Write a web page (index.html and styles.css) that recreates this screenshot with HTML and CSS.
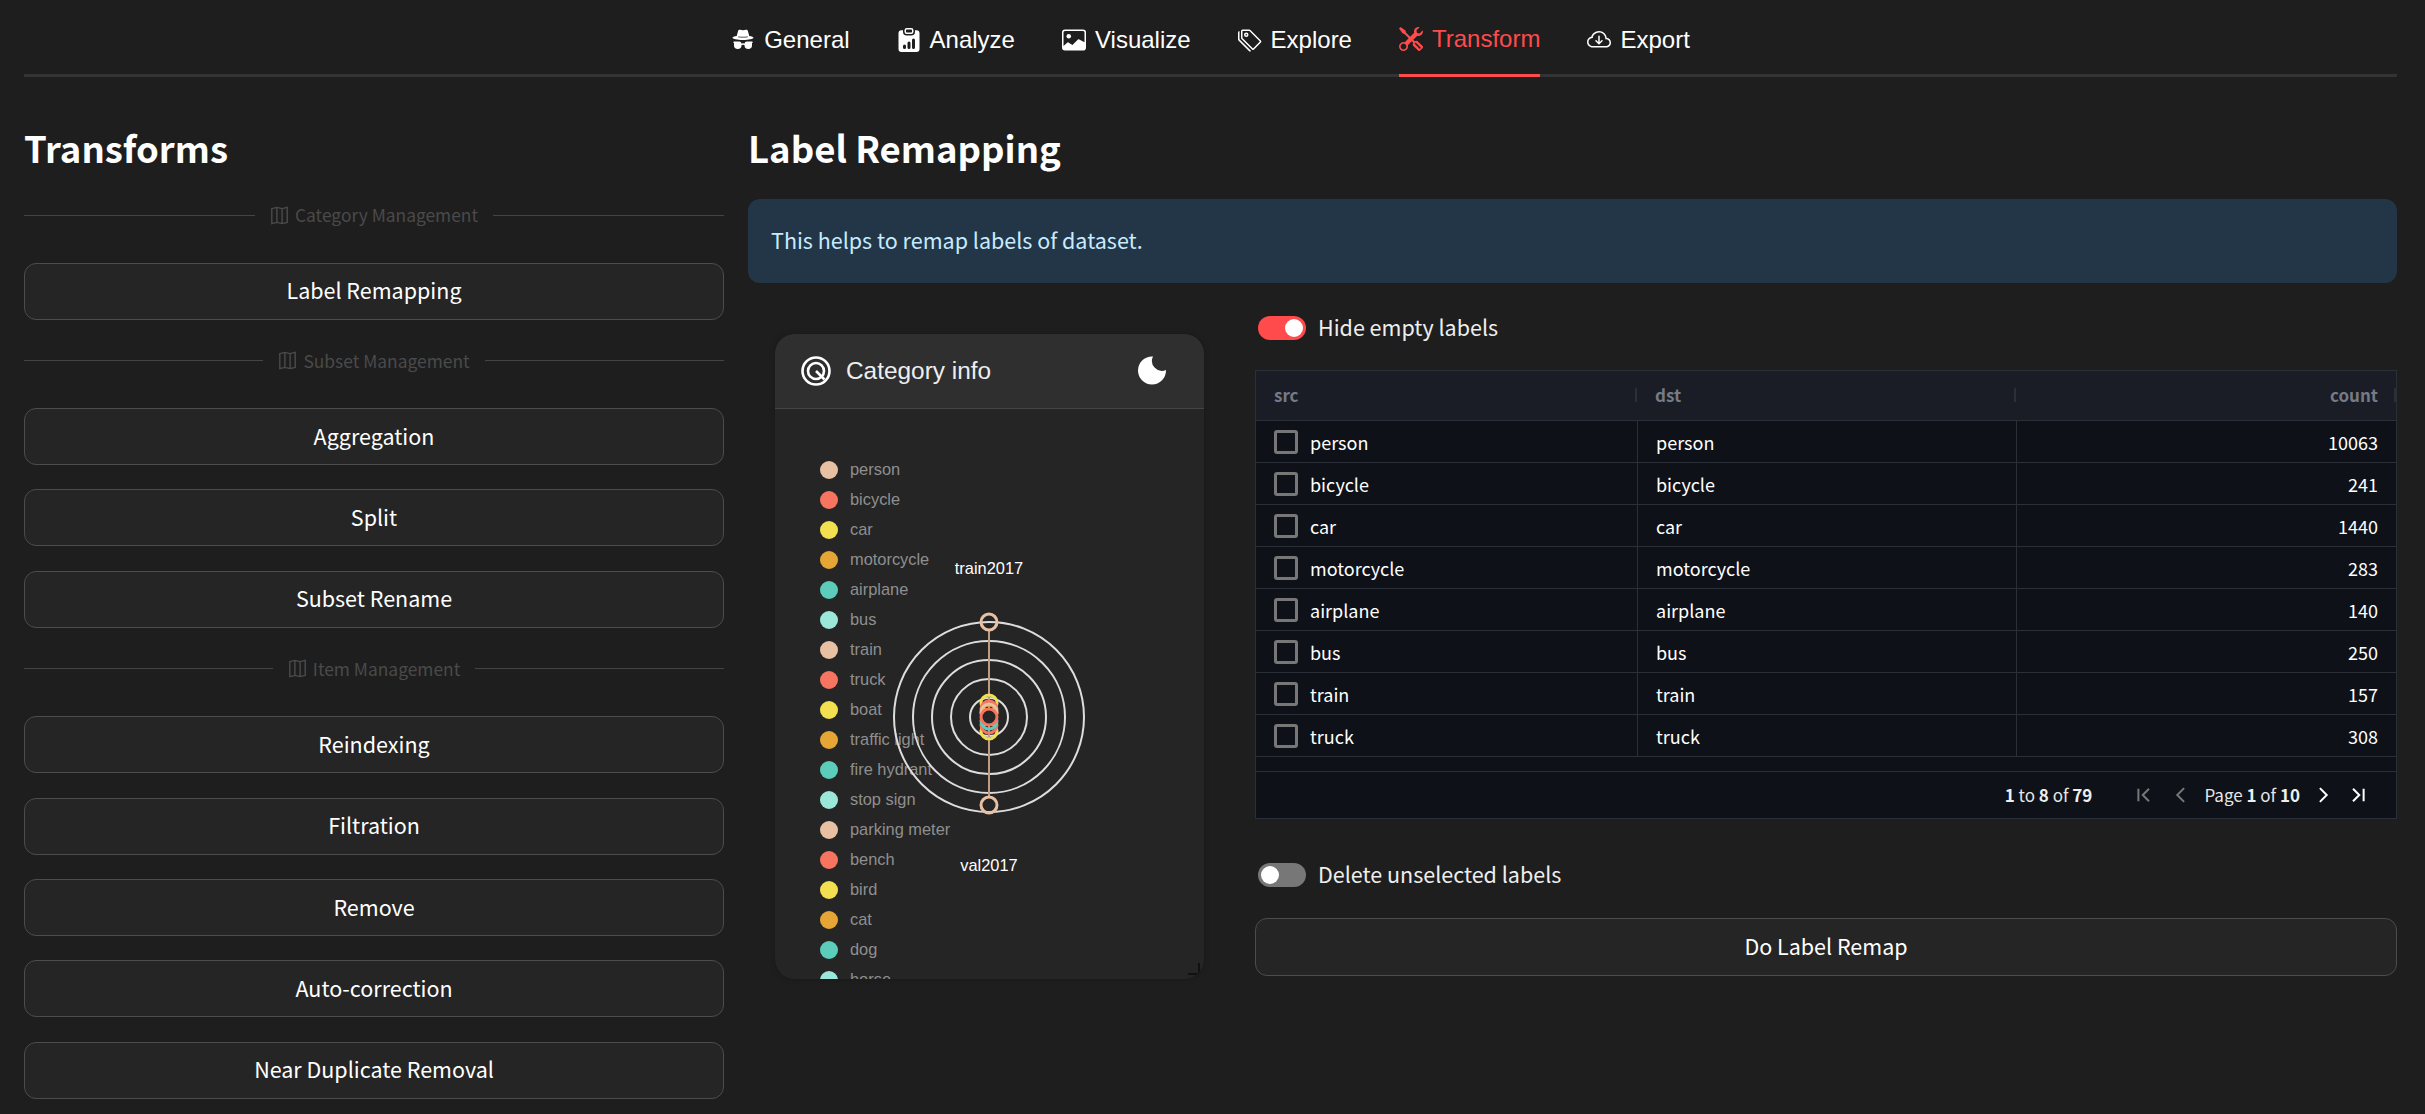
FILE: index.html
```html
<!DOCTYPE html>
<html lang="en">
<head>
<meta charset="utf-8">
<title>Transform</title>
<link rel="stylesheet" href="styles.css">
</head>
<body>
<nav class="nav">
  <a class="tab"><svg class="nav-ico" viewBox="0 0 16 16"><path d="m4.736 1.968-.892 3.269-.014.058C2.113 5.568 1 6.006 1 6.5 1 7.328 4.134 8 8 8s7-.672 7-1.5c0-.494-1.113-.932-2.83-1.205a1.032 1.032 0 0 0-.014-.058l-.892-3.27c-.146-.533-.698-.849-1.239-.734C9.411 1.363 8.62 1.5 8 1.5c-.62 0-1.411-.136-2.025-.267-.541-.115-1.093.2-1.239.735Zm.015 3.867a.25.25 0 0 1 .274-.224c.9.092 1.91.143 2.975.143a29.58 29.58 0 0 0 2.975-.143.25.25 0 0 1 .05.498c-.918.093-1.944.145-3.025.145s-2.107-.052-3.025-.145a.25.25 0 0 1-.224-.274ZM3.5 10h2a.5.5 0 0 1 .5.5v1a1.5 1.5 0 0 1-3 0v-1a.5.5 0 0 1 .5-.5Zm-1.5.5c0-.175.03-.344.085-.5H2a.5.5 0 0 1 0-1h3.5a1.5 1.5 0 0 1 1.488 1.312 3.5 3.5 0 0 1 2.024 0A1.5 1.5 0 0 1 10.5 9H14a.5.5 0 0 1 0 1h-.085c.055.156.085.325.085.5v1a2.5 2.5 0 0 1-5 0v-.14l-.21-.07a2.5 2.5 0 0 0-1.58 0l-.21.07v.14a2.5 2.5 0 0 1-5 0v-1Zm8.5-.5h2a.5.5 0 0 1 .5.5v1a1.5 1.5 0 0 1-3 0v-1a.5.5 0 0 1 .5-.5Z"/></svg>General</a>
  <a class="tab"><svg class="nav-ico" viewBox="0 0 16 16"><path d="M6.5 0A1.5 1.5 0 0 0 5 1.5v1A1.5 1.5 0 0 0 6.5 4h3A1.5 1.5 0 0 0 11 2.5v-1A1.5 1.5 0 0 0 9.5 0h-3Zm3 1a.5.5 0 0 1 .5.5v1a.5.5 0 0 1-.5.5h-3a.5.5 0 0 1-.5-.5v-1a.5.5 0 0 1 .5-.5h3Z"/><path d="M4 1.5H3a2 2 0 0 0-2 2V14a2 2 0 0 0 2 2h10a2 2 0 0 0 2-2V3.5a2 2 0 0 0-2-2h-1v1A2.5 2.5 0 0 1 9.5 5h-3A2.5 2.5 0 0 1 4 2.5v-1ZM10 8a1 1 0 1 1 2 0v5a1 1 0 1 1-2 0V8Zm-6 4a1 1 0 1 1 2 0v1a1 1 0 1 1-2 0v-1Zm4-3a1 1 0 0 1 1 1v3a1 1 0 1 1-2 0v-3a1 1 0 0 1 1-1Z"/></svg>Analyze</a>
  <a class="tab"><svg class="nav-ico" viewBox="0 0 16 16"><path d="M6.002 5.5a1.5 1.5 0 1 1-3 0 1.5 1.5 0 0 1 3 0z"/><path d="M2.002 1a2 2 0 0 0-2 2v10a2 2 0 0 0 2 2h12a2 2 0 0 0 2-2V3a2 2 0 0 0-2-2h-12zm12 1a1 1 0 0 1 1 1v6.5l-3.777-1.947a.5.5 0 0 0-.577.093l-3.71 3.71-2.66-1.772a.5.5 0 0 0-.63.062L1.002 12V3a1 1 0 0 1 1-1h12z"/></svg>Visualize</a>
  <a class="tab"><svg class="nav-ico" viewBox="0 0 16 16"><path d="M3 2v4.586l7 7L14.586 9l-7-7H3zM2 2a1 1 0 0 1 1-1h4.586a1 1 0 0 1 .707.293l7 7a1 1 0 0 1 0 1.414l-4.586 4.586a1 1 0 0 1-1.414 0l-7-7A1 1 0 0 1 2 6.586V2z"/><path d="M5.5 5a.5.5 0 1 1 0-1 .5.5 0 0 1 0 1zm0 1a1.5 1.5 0 1 0 0-3 1.5 1.5 0 0 0 0 3zM1 7.086a1 1 0 0 0 .293.707L8.75 15.25l-.043.043a1 1 0 0 1-1.414 0l-7-7A1 1 0 0 1 0 7.586V3a1 1 0 0 1 1-1v5.086z"/></svg>Explore</a>
  <a class="tab tab-active"><svg class="nav-ico" viewBox="0 0 16 16"><path d="M1 0 0 1l2.2 3.081a1 1 0 0 0 .815.419h.07a1 1 0 0 1 .708.293l2.675 2.675-2.617 2.654A3.003 3.003 0 0 0 0 13a3 3 0 1 0 5.878-.851l2.654-2.617.968.968-.305.914a1 1 0 0 0 .242 1.023l3.27 3.27a.997.997 0 0 0 1.414 0l1.586-1.586a.997.997 0 0 0 0-1.414l-3.27-3.27a1 1 0 0 0-1.023-.242L10.5 9.5l-.96-.96 2.68-2.643A3.005 3.005 0 0 0 16 3c0-.269-.035-.53-.102-.777l-2.14 2.141L12 4l-.364-1.757L13.777.102a3 3 0 0 0-3.675 3.68L7.462 6.46 4.793 3.793a1 1 0 0 1-.293-.707v-.071a1 1 0 0 0-.419-.814L1 0Zm9.646 10.646a.5.5 0 0 1 .708 0l2.914 2.915a.5.5 0 0 1-.707.707l-2.915-2.914a.5.5 0 0 1 0-.708ZM3 11l.471.242.529.026.287.445.445.287.026.529L5 13l-.242.471-.026.529-.445.287-.287.445-.529.026L3 15l-.471-.242L2 14.732l-.287-.445L1.268 14l-.026-.529L1 13l.242-.471.026-.529.445-.287.287-.445.529-.026L3 11Z"/></svg>Transform</a>
  <a class="tab"><svg class="nav-ico" viewBox="0 0 16 16"><path d="M7.646 10.854a.5.5 0 0 0 .708 0l2-2a.5.5 0 0 0-.708-.708L8.5 9.293V5.5a.5.5 0 0 0-1 0v3.793L6.354 8.146a.5.5 0 1 0-.708.708l2 2z"/><path d="M4.406 3.342A5.53 5.53 0 0 1 8 2c2.69 0 4.923 2 5.166 4.579C14.758 6.804 16 8.137 16 9.773 16 11.569 14.502 13 12.687 13H3.781C1.708 13 0 11.366 0 9.318c0-1.763 1.266-3.223 2.942-3.593.143-.863.698-1.723 1.464-2.383zm.653.757c-.757.653-1.153 1.44-1.153 2.056v.448l-.445.049C2.064 6.805 1 7.952 1 9.318 1 10.785 2.23 12 3.781 12h8.906C13.98 12 15 10.988 15 9.773c0-1.216-1.02-2.228-2.313-2.228h-.5v-.5C12.188 4.825 10.328 3 8 3a4.53 4.53 0 0 0-2.941 1.1z"/></svg>Export</a>
</nav>

<div class="layout">
  <aside class="side">
    <h1 class="title">Transforms</h1>
    <div class="divider div-first"><span class="div-label"><svg class="map-ico" viewBox="0 0 16 16"><path d="M1.5 2.2l4.3-1 4.4 1 4.3-1v12.6l-4.3 1-4.4-1-4.3 1z M5.8 1.2v12.6 M10.2 2.2v12.6"/></svg>Category Management</span></div>
    <button class="btn btn-first">Label Remapping</button>
    <div class="divider div-next"><span class="div-label"><svg class="map-ico" viewBox="0 0 16 16"><path d="M1.5 2.2l4.3-1 4.4 1 4.3-1v12.6l-4.3 1-4.4-1-4.3 1z M5.8 1.2v12.6 M10.2 2.2v12.6"/></svg>Subset Management</span></div>
    <button class="btn btn-first">Aggregation</button>
    <button class="btn">Split</button>
    <button class="btn">Subset Rename</button>
    <div class="divider div-next"><span class="div-label"><svg class="map-ico" viewBox="0 0 16 16"><path d="M1.5 2.2l4.3-1 4.4 1 4.3-1v12.6l-4.3 1-4.4-1-4.3 1z M5.8 1.2v12.6 M10.2 2.2v12.6"/></svg>Item Management</span></div>
    <button class="btn btn-first">Reindexing</button>
    <button class="btn">Filtration</button>
    <button class="btn">Remove</button>
    <button class="btn">Auto-correction</button>
    <button class="btn">Near Duplicate Removal</button>
  </aside>

  <main class="main">
    <h1 class="title">Label Remapping</h1>
    <div class="info"><span class="lift">This helps to remap labels of dataset.</span></div>
    <div class="columns">
      <section class="card">
        <header class="card-head">
          <svg class="card-ico" viewBox="0 0 30 30"><circle cx="15" cy="15" r="13.5" fill="none" stroke="#fff" stroke-width="2.6"/><circle cx="15" cy="15" r="8" fill="none" stroke="#fff" stroke-width="2.6"/><path d="M15 15l8.5 8.5" stroke="#fff" stroke-width="2.6" fill="none"/></svg>
          <span class="card-title">Category info</span>
          <svg class="card-ico" viewBox="0 0 30 30"><path d="M15 .5A14 14 0 1 0 28 14 10 10 0 0 1 15 .5Z" fill="#fff"/></svg>
        </header>
        <svg class="chart" viewBox="0 0 429 570" width="429" height="570">
          <g class="legend">
            <circle cx="54" cy="61" r="9" fill="#e8c0a3"/><text x="75" y="66">person</text>
            <circle cx="54" cy="91" r="9" fill="#f77461"/><text x="75" y="96">bicycle</text>
            <circle cx="54" cy="121" r="9" fill="#f2e050"/><text x="75" y="126">car</text>
            <circle cx="54" cy="151" r="9" fill="#e6a635"/><text x="75" y="156">motorcycle</text>
            <circle cx="54" cy="181" r="9" fill="#5ccdba"/><text x="75" y="186">airplane</text>
            <circle cx="54" cy="211" r="9" fill="#9be7d9"/><text x="75" y="216">bus</text>
            <circle cx="54" cy="241" r="9" fill="#e8c0a3"/><text x="75" y="246">train</text>
            <circle cx="54" cy="271" r="9" fill="#f77461"/><text x="75" y="276">truck</text>
            <circle cx="54" cy="301" r="9" fill="#f2e050"/><text x="75" y="306">boat</text>
            <circle cx="54" cy="331" r="9" fill="#e6a635"/><text x="75" y="336">traffic light</text>
            <circle cx="54" cy="361" r="9" fill="#5ccdba"/><text x="75" y="366">fire hydrant</text>
            <circle cx="54" cy="391" r="9" fill="#9be7d9"/><text x="75" y="396">stop sign</text>
            <circle cx="54" cy="421" r="9" fill="#e8c0a3"/><text x="75" y="426">parking meter</text>
            <circle cx="54" cy="451" r="9" fill="#f77461"/><text x="75" y="456">bench</text>
            <circle cx="54" cy="481" r="9" fill="#f2e050"/><text x="75" y="486">bird</text>
            <circle cx="54" cy="511" r="9" fill="#e6a635"/><text x="75" y="516">cat</text>
            <circle cx="54" cy="541" r="9" fill="#5ccdba"/><text x="75" y="546">dog</text>
            <circle cx="54" cy="571" r="9" fill="#9be7d9"/><text x="75" y="576">horse</text>
          </g>
          <g class="rings">
            <circle cx="214" cy="308" r="19"/><circle cx="214" cy="308" r="38"/><circle cx="214" cy="308" r="57"/><circle cx="214" cy="308" r="76"/><circle cx="214" cy="308" r="95"/>
          </g>
          <path d="M214 221V388" stroke="#c09c82" stroke-width="2" fill="none"/>
          <g class="marks">
            <circle cx="214" cy="213" r="8" stroke="#e8c0a3"/>
            <circle cx="214" cy="396" r="8" stroke="#e8c0a3"/>
            <circle cx="214" cy="294" r="8" stroke="#f2e050"/>
            <circle cx="214" cy="322" r="8" stroke="#f2e050"/>
            <circle cx="214" cy="300" r="8" stroke="#f77461"/>
            <circle cx="214" cy="316" r="8" stroke="#f77461"/>
            <circle cx="214" cy="312" r="8" stroke="#5ccdba"/>
            <circle cx="214" cy="304" r="8" stroke="#e6a635"/>
            <circle cx="214" cy="303" r="8" stroke="#e8c0a3"/>
            <circle class="mark-top" cx="214" cy="308" r="8" stroke="#f77461"/>
          </g>
          <text class="axis" x="214" y="165">train2017</text>
          <text class="axis" x="214" y="462">val2017</text>
        </svg>
        <svg class="resize" viewBox="0 0 12 12"><path d="M11 0V11H0" fill="none" stroke="#111" stroke-width="2"/></svg>
      </section>

      <section class="panel">
        <label class="toggle-row"><span class="toggle toggle-on"><span class="knob"></span></span><span class="lift">Hide empty labels</span></label>
        <div class="grid">
          <div class="grid-row grid-head">
            <div class="cell"><span>src</span><i class="grip"></i></div>
            <div class="cell"><span>dst</span><i class="grip"></i></div>
            <div class="cell cell-num"><span>count</span><i class="grip"></i></div>
          </div>
          <div class="grid-body">
            <div class="grid-row"><div class="cell"><i class="check"></i>person</div><div class="cell">person</div><div class="cell cell-num">10063</div></div>
            <div class="grid-row"><div class="cell"><i class="check"></i>bicycle</div><div class="cell">bicycle</div><div class="cell cell-num">241</div></div>
            <div class="grid-row"><div class="cell"><i class="check"></i>car</div><div class="cell">car</div><div class="cell cell-num">1440</div></div>
            <div class="grid-row"><div class="cell"><i class="check"></i>motorcycle</div><div class="cell">motorcycle</div><div class="cell cell-num">283</div></div>
            <div class="grid-row"><div class="cell"><i class="check"></i>airplane</div><div class="cell">airplane</div><div class="cell cell-num">140</div></div>
            <div class="grid-row"><div class="cell"><i class="check"></i>bus</div><div class="cell">bus</div><div class="cell cell-num">250</div></div>
            <div class="grid-row"><div class="cell"><i class="check"></i>train</div><div class="cell">train</div><div class="cell cell-num">157</div></div>
            <div class="grid-row"><div class="cell"><i class="check"></i>truck</div><div class="cell">truck</div><div class="cell cell-num">308</div></div>
          </div>
          <div class="grid-foot">
            <span class="range"><b>1</b> to <b>8</b> of <b>79</b></span>
            <svg class="pg pg-dim" viewBox="0 0 16 16"><path d="M3.5 3v10M12 3L7 8l5 5"/></svg>
            <svg class="pg pg-dim pg-prev" viewBox="0 0 16 16"><path d="M10.5 2.5L5 8l5.5 5.5"/></svg>
            <span class="page">Page <b>1</b> of <b>10</b></span>
            <svg class="pg pg-next" viewBox="0 0 16 16"><path d="M5.5 2.5L11 8l-5.5 5.5"/></svg>
            <svg class="pg pg-last" viewBox="0 0 16 16"><path d="M12.5 3v10M4 3l5 5-5 5"/></svg>
          </div>
        </div>
        <label class="toggle-row toggle-row-2"><span class="toggle"><span class="knob"></span></span><span class="lift">Delete unselected labels</span></label>
        <button class="btn btn-do">Do Label Remap</button>
      </section>
    </div>
  </main>
</div>
</body>
</html>
```
FILE: styles.css
```css
* { box-sizing: border-box; }
html, body { margin: 0; height: 1114px; overflow: hidden; }
body {
  background: #1e1e1e;
  color: #fff;
  font-family: "Noto Sans CJK SC", "Source Sans Pro", "Noto Sans", sans-serif;
  font-size: 21.5px;
}
.nav {
  margin: 0 28px 0 24px;
  height: 77px;
  border-bottom: 3px solid #333;
  display: flex;
  justify-content: center;
  gap: 47px;
}
.tab {
  display: flex;
  align-items: center;
  gap: 9px;
  height: 77px;
  padding-top: 3px;
  font-family: "Liberation Sans", Arial, sans-serif;
  font-size: 24px;
  color: #fff;
}
.nav-ico { width: 24px; height: 24px; fill: currentColor; flex: none; }
.tab-active { color: #ff4b4b; border-bottom: 3px solid #ff4b4b; }

.layout { display: flex; padding: 0 28px 0 24px; gap: 24px; }
.side { width: 700px; flex: none; }
.main { flex: 1; min-width: 0; }
.title {
  margin: 0;
  padding-top: 43px;
  font-size: 36.5px;
  line-height: 56px;
  font-weight: 600;
}
.lift { padding-bottom: 3px; }
.divider {
  display: flex;
  align-items: center;
  gap: 15px;
  height: 22px;
  color: #4a4a4a;
  font-size: 17.4px;
  line-height: 22px;
}
.divider::before, .divider::after { content: ""; flex: 1; height: 1px; background: #444; }
.div-first { margin-top: 28px; }
.div-next { margin-top: 30px; }
.div-label { display: flex; align-items: center; gap: 6px; }
.map-ico { width: 19px; height: 19px; fill: none; stroke: #4a4a4a; stroke-width: 1.2; }
.btn {
  display: block;
  width: 100%;
  height: 57px;
  margin-top: 24.4px;
  padding-bottom: 3px;
  background: #252525;
  border: 1px solid #4c4c4c;
  border-radius: 12px;
  color: #fff;
  font-family: inherit;
  font-size: 21.5px;
  line-height: 28px;
}
.btn-first { margin-top: 36.5px; }
.info {
  margin-top: 23px;
  height: 84px;
  padding: 0 23px;
  display: flex;
  align-items: center;
  border-radius: 12px;
  background: #233648;
  color: #c7ebff;
  font-size: 21.5px;
}
.columns { display: flex; margin-top: 30px; }
.card {
  position: relative;
  width: 429px;
  height: 645px;
  margin: 21px 0 0 27px;
  flex: none;
  background: #252525;
  border-radius: 20px;
  overflow: hidden;
  box-shadow: 0 0 6px rgba(0,0,0,.2);
}
.card-head {
  height: 75px;
  background: #2f2f2f;
  border-bottom: 1px solid #444;
  padding: 0 36px 0 26px;
  display: flex;
  align-items: center;
  gap: 15px;
}
.card-ico { width: 30px; height: 30px; flex: none; }
.card-title { flex: 1; font-family: "Liberation Sans", Arial, sans-serif; font-size: 24.4px; color: #eee; }
.chart { display: block; }
.legend text { font-family: "Liberation Sans", Arial, sans-serif; font-size: 16.4px; fill: #8f8f8f; }
.rings circle { fill: none; stroke: #ddd; stroke-width: 2; }
.marks circle { fill: none; stroke-width: 3; }
.marks .mark-top { fill: #252525; }
.axis { font-family: "Liberation Sans", Arial, sans-serif; font-size: 16.4px; fill: #fff; text-anchor: middle; }
.resize { position: absolute; right: 4px; bottom: 4px; width: 12px; height: 12px; }

.panel { flex: 1; min-width: 0; margin-left: 51px; }
.toggle-row { display: flex; align-items: center; gap: 12px; height: 30px; padding-left: 3px; font-size: 21.5px; color: #eee; }
.toggle { width: 48px; height: 24px; border-radius: 12px; background: #777; display: flex; align-items: center; padding: 0 3px; flex: none; }
.toggle-on { background: #ff4b4b; justify-content: flex-end; }
.knob { width: 18px; height: 18px; border-radius: 50%; background: #fff; }
.grid {
  margin-top: 27px;
  height: 449px;
  background: #0e1117;
  border: 1px solid #2b2f38;
  color: #fff;
  font-size: 18px;
}
.grid-row { display: grid; grid-template-columns: 381px 379px 1fr; height: 42px; border-bottom: 1px solid #2b2f38; }
.grid-head { height: 50px; background: #1a1d26; color: #767a84; font-weight: 600; font-size: 17px; }
.grid-body { height: 351px; border-bottom: 1px solid #2b2f38; }
.cell { display: flex; align-items: center; padding: 0 18px; line-height: 24px; position: relative; }
.grid-head .cell { padding-bottom: 2px; }
.grid-body .cell + .cell { border-left: 1px solid #2b2f38; }
.cell-num { justify-content: flex-end; }
.grip { position: absolute; right: 0; top: 17px; width: 2px; height: 14px; background: #2b2f38; }
.check { width: 24px; height: 24px; border: 3px solid #777; border-radius: 3px; margin-right: 12px; flex: none; }
.grid-foot { height: 46px; display: flex; align-items: center; justify-content: flex-end; padding-right: 28px; font-size: 17px; line-height: 24px; color: #e6e6e6; }
.grid-foot b { font-weight: 700; color: #eee; }
.range { margin-right: 42px; }
.page { margin: 0 13px; }
.pg { width: 20px; height: 20px; fill: none; stroke: #fff; stroke-width: 1.6; flex: none; }
.pg-dim { stroke: #777; }
.pg-prev { margin-left: 17px; }
.pg-last { margin-left: 15px; }
.toggle-row-2 { margin-top: 41px; }
.btn-do { margin-top: 28px; height: 58px; }
```
